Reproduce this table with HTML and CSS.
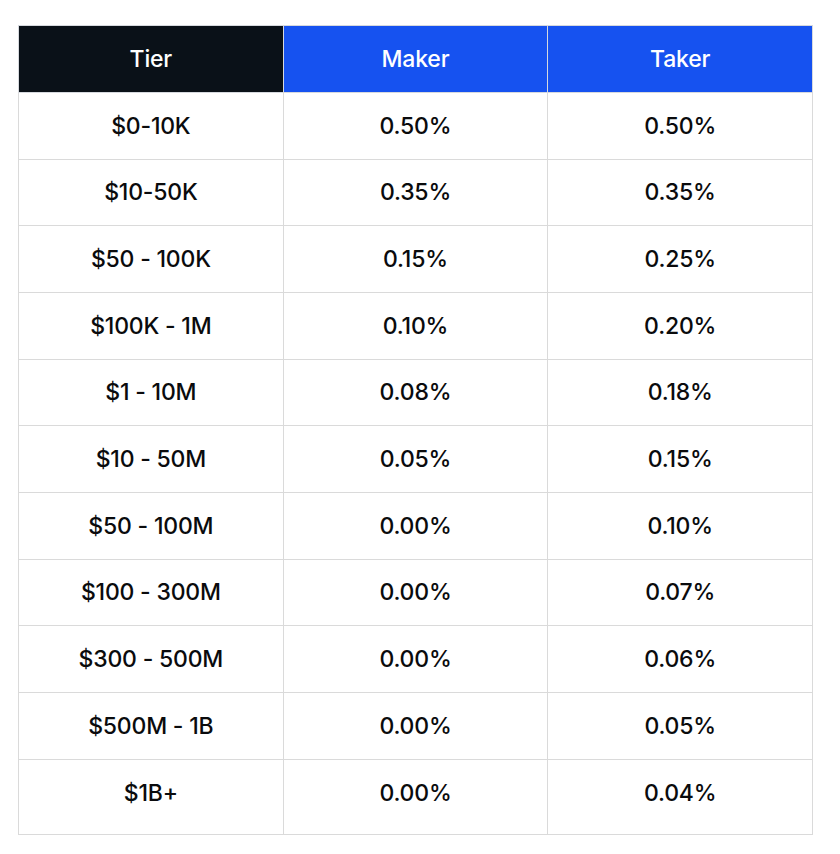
FILE: index.html
```html
<!DOCTYPE html>
<html lang="en">
<head>
<meta charset="utf-8">
<title>Fee tiers</title>
<link rel="stylesheet" href="styles.css">
</head>
<body>
<table class="fees">
  <thead>
    <tr>
      <th class="th-tier">Tier</th>
      <th class="th-blue">Maker</th>
      <th class="th-blue">Taker</th>
    </tr>
  </thead>
  <tbody>
    <tr><td>$0-10K</td><td>0.50%</td><td>0.50%</td></tr>
    <tr><td>$10-50K</td><td>0.35%</td><td>0.35%</td></tr>
    <tr><td>$50 - 100K</td><td>0.15%</td><td>0.25%</td></tr>
    <tr><td>$100K - 1M</td><td>0.10%</td><td>0.20%</td></tr>
    <tr><td>$1 - 10M</td><td>0.08%</td><td>0.18%</td></tr>
    <tr><td>$10 - 50M</td><td>0.05%</td><td>0.15%</td></tr>
    <tr><td>$50 - 100M</td><td>0.00%</td><td>0.10%</td></tr>
    <tr><td>$100 - 300M</td><td>0.00%</td><td>0.07%</td></tr>
    <tr><td>$300 - 500M</td><td>0.00%</td><td>0.06%</td></tr>
    <tr><td>$500M - 1B</td><td>0.00%</td><td>0.05%</td></tr>
    <tr class="last"><td>$1B+</td><td>0.00%</td><td>0.04%</td></tr>
  </tbody>
</table>
</body>
</html>
```

FILE: styles.css
```css
html, body {
  margin: 0;
  padding: 0;
  background: #ffffff;
}

body {
  padding: 25px 0 0 18px;
  font-family: Inter, "Liberation Sans", sans-serif;
  color: #0a0b0d;
}

.fees {
  border-collapse: collapse;
  width: 795px;
  table-layout: fixed;
}

.fees th,
.fees td {
  text-align: center;
  vertical-align: middle;
  padding: 0;
  font-size: 23px;
  font-weight: 500;
  letter-spacing: -0.2px;
}

.fees th {
  height: 66px;
  color: #ffffff;
  border: 1px solid #d6d9de;
}

.th-tier {
  background: #0a1118;
}

.th-blue {
  background: #1652f0;
}

.fees td {
  height: 65.67px;
  border: 1px solid #dadada;
}

.fees tr.last td {
  height: 66px;
  padding-bottom: 8px;
}
```
